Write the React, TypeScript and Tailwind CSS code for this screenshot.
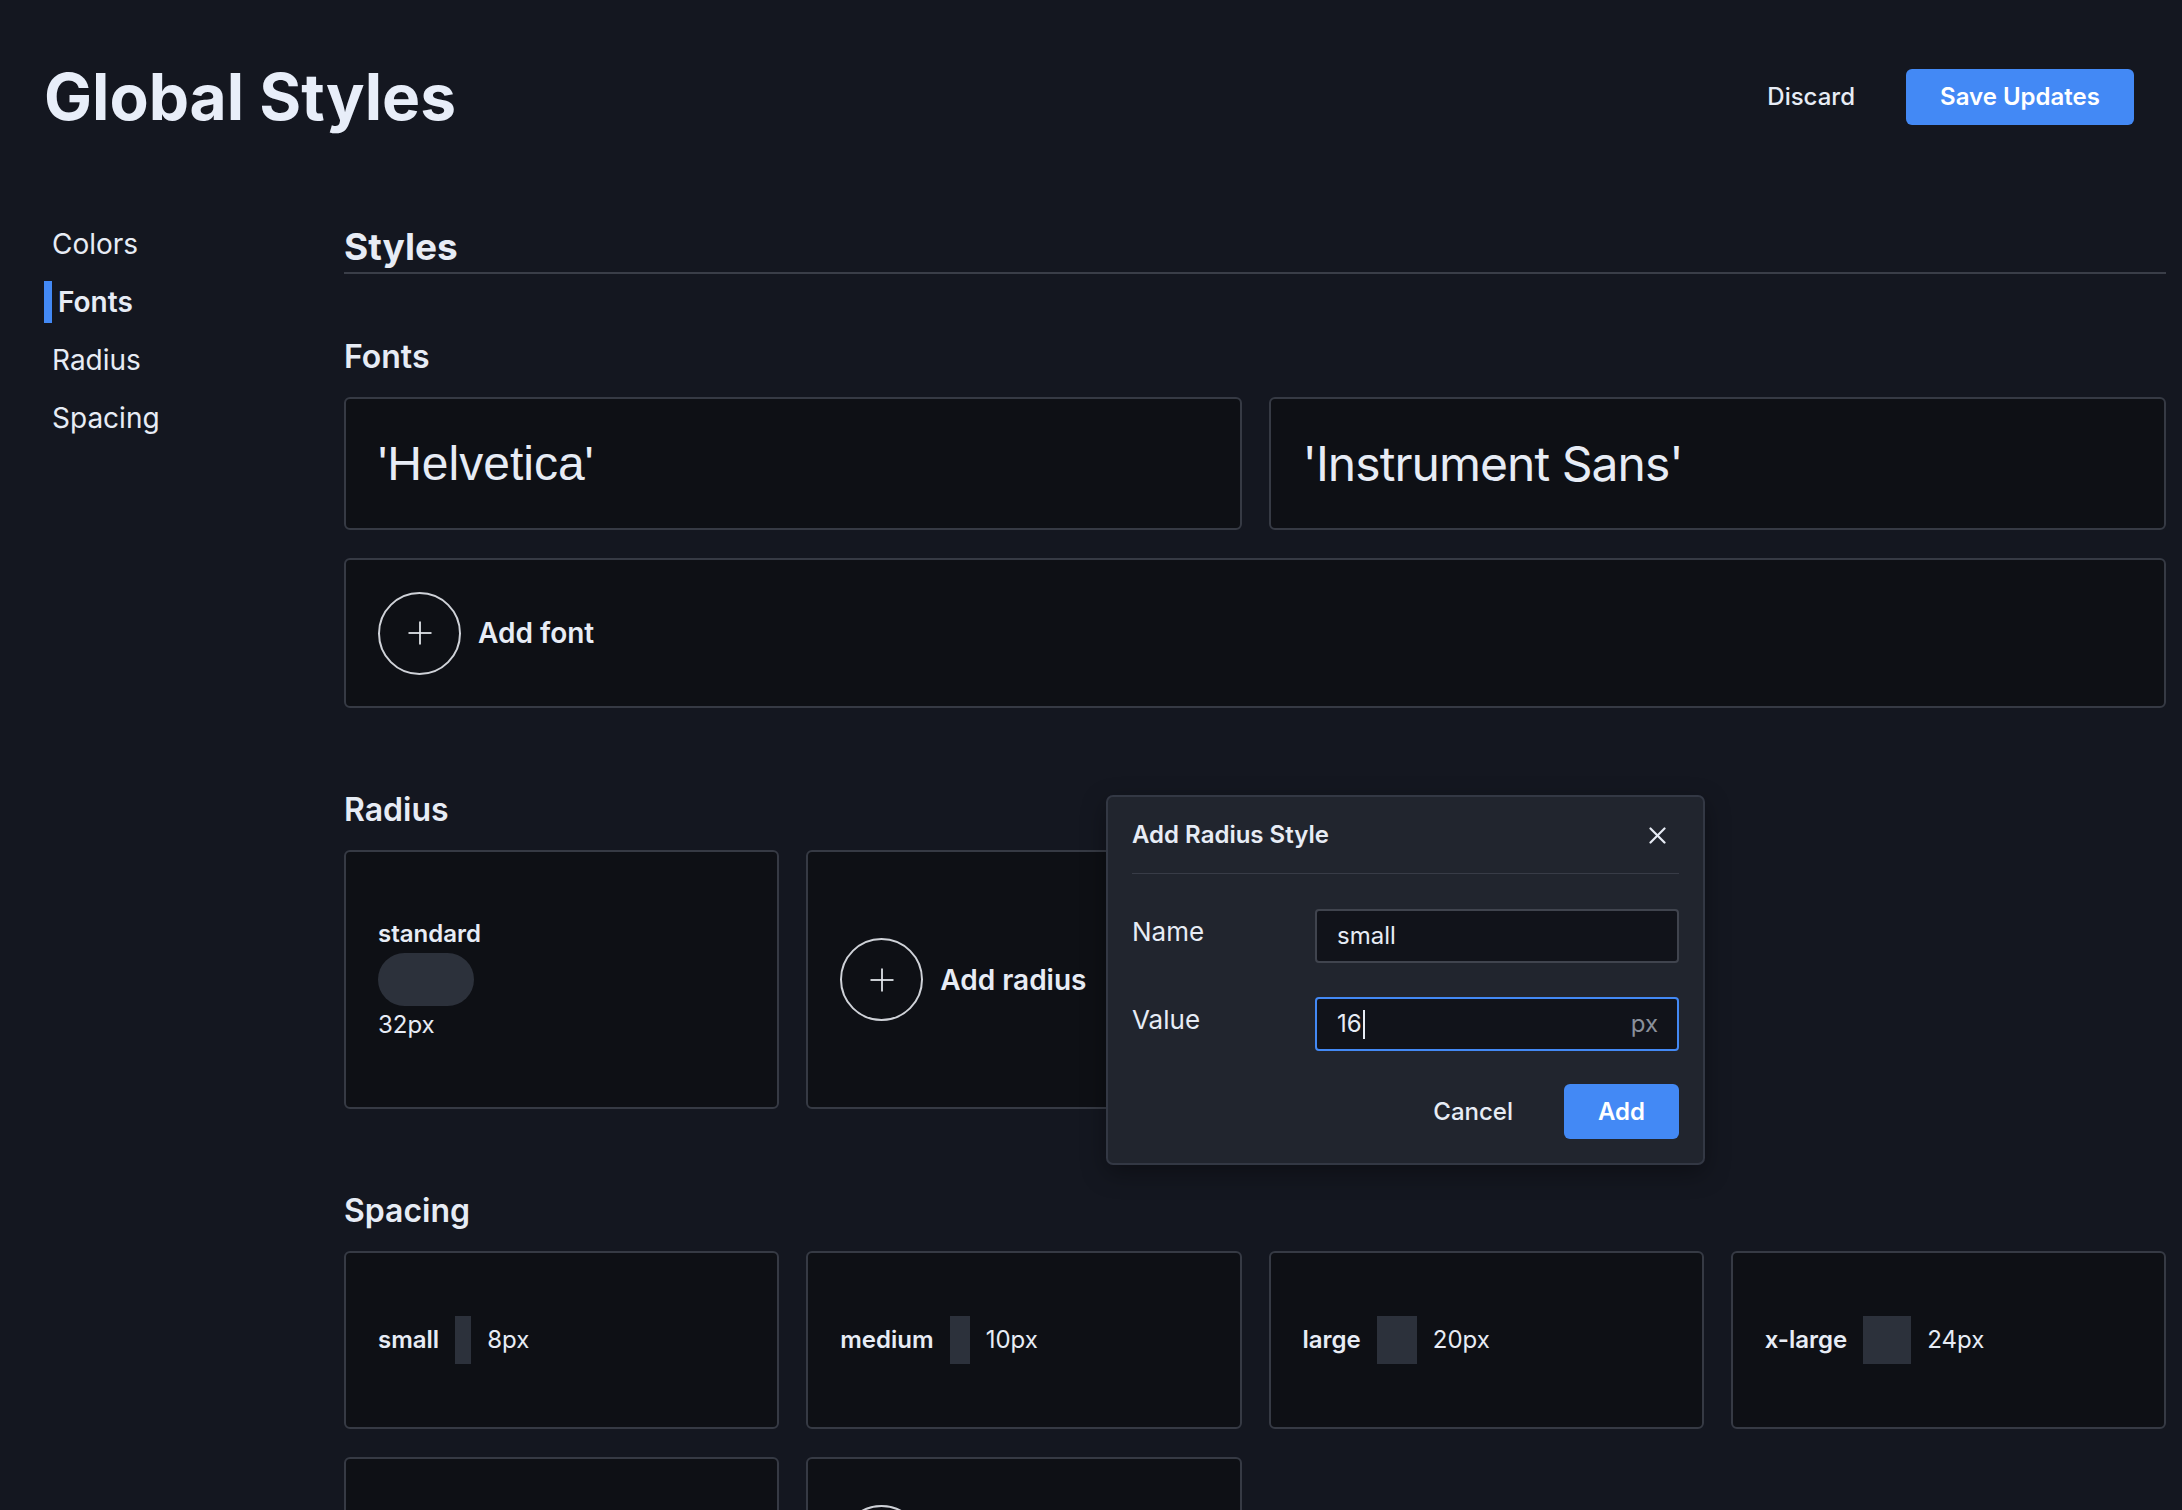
import React from "react";

const cardCls = "rounded-[6px] border-2 border-[#363a44] bg-[#0e1015]";

function PlusCircle() {
  return (
    <div className="flex h-[83px] w-[83px] shrink-0 items-center justify-center rounded-full border-2 border-[#cfd2d8]">
      <svg width="24" height="24" viewBox="0 0 24 24" fill="none" stroke="#e5e8ee" strokeWidth="1.75" strokeLinecap="butt">
        <line x1="0.5" y1="12" x2="23.5" y2="12" />
        <line x1="12" y1="0.5" x2="12" y2="23.5" />
      </svg>
    </div>
  );
}

function SectionTitle({ children }: { children: React.ReactNode }) {
  return <h3 className="mb-[22px] text-[32px] font-semibold leading-[36px]">{children}</h3>;
}

const spacing = [
  { name: "small", value: "8px", w: "w-[16px]" },
  { name: "medium", value: "10px", w: "w-[20px]" },
  { name: "large", value: "20px", w: "w-[40px]" },
  { name: "x-large", value: "24px", w: "w-[48px]" },
];

export default function App() {
  return (
    <div className="relative h-[1510px] w-full overflow-hidden bg-[#141720] font-['Inter',sans-serif] text-[#e7ecf5]">
      <div className="pt-[65px]">
        <header className="flex h-[64px] items-center justify-between pl-[44px] pr-[48px]">
          <h1 className="text-[64px] font-bold leading-[64px] text-[#e8eef9]">Global Styles</h1>
          <div className="flex items-center gap-[26px]">
            <button className="h-[56px] px-[25px] text-[24px] font-medium text-[#e7ecf5]">Discard</button>
            <button className="h-[56px] w-[228px] rounded-[6px] bg-[#4389f5] text-[24px] font-semibold text-white">
              Save Updates
            </button>
          </div>
        </header>

        <div className="mt-[93px] flex pl-[44px]">
          <nav className="flex w-[300px] shrink-0 flex-col gap-[16px] pt-[1px] text-[28px] leading-[42px]">
            <div className="pl-[8px]">Colors</div>
            <div className="border-l-[8px] border-[#4389f5] pl-[6px] font-semibold">Fonts</div>
            <div className="pl-[8px]">Radius</div>
            <div className="pl-[8px]">Spacing</div>
          </nav>

          <main className="w-[1822px] shrink-0">
            <h2 className="border-b-2 border-[#3a3e48] text-[37px] font-bold leading-[50px]">Styles</h2>

            <section className="mt-[65px]">
              <SectionTitle>Fonts</SectionTitle>
              <div className="grid grid-cols-2 gap-[27px]">
                <div className={`${cardCls} flex h-[133px] items-center pl-[32px]`}>
                  <span className="font-['Liberation_Sans',Arial,sans-serif] text-[48px] leading-[56px]">'Helvetica'</span>
                </div>
                <div className={`${cardCls} flex h-[133px] items-center pl-[32px]`}>
                  <span className="text-[48px] leading-[56px] tracking-[-0.02em]">'Instrument Sans'</span>
                </div>
              </div>
              <div className={`${cardCls} mt-[28px] flex h-[150px] items-center gap-[17px] pl-[32px]`}>
                <PlusCircle />
                <span className="text-[28px] font-semibold">Add font</span>
              </div>
            </section>

            <section className="mt-[84px]">
              <SectionTitle>Radius</SectionTitle>
              <div className="grid grid-cols-4 gap-[27px]">
                <div className={`${cardCls} flex h-[259px] items-center pl-[32px]`}>
                  <div className="flex flex-col items-start gap-[3px] text-[24px] leading-[32px]">
                    <span className="font-semibold">standard</span>
                    <div className="h-[53px] w-[96px] rounded-[32px] bg-[#2c313b]" />
                    <span>32px</span>
                  </div>
                </div>
                <div className={`${cardCls} flex h-[259px] items-center gap-[17px] pl-[32px]`}>
                  <PlusCircle />
                  <span className="text-[28px] font-semibold">Add radius</span>
                </div>
              </div>
            </section>

            <section className="mt-[84px]">
              <SectionTitle>Spacing</SectionTitle>
              <div className="grid grid-cols-4 gap-x-[27px] gap-y-[28px]">
                {spacing.map((s) => (
                  <div key={s.name} className={`${cardCls} flex h-[178px] items-center gap-[16px] pl-[32px] text-[24px] leading-[32px]`}>
                    <span className="font-semibold">{s.name}</span>
                    <div className={`h-[48px] ${s.w} bg-[#2c313b]`} />
                    <span>{s.value}</span>
                  </div>
                ))}
                <div className={`${cardCls} h-[178px]`} />
                <div className={`${cardCls} flex h-[178px] items-center pl-[32px]`}>
                  <PlusCircle />
                </div>
              </div>
            </section>
          </main>
        </div>
      </div>

      {/* Add Radius Style popover */}
      <div className="absolute left-[1106px] top-[795px] w-[599px] rounded-[7px] border-2 border-[#333844] bg-[#21252e] px-[24px] pb-[24px] pt-[22px] shadow-[0_8px_24px_rgba(0,0,0,0.35)]">
        <div className="flex h-[32px] items-center justify-between">
          <span className="text-[24px] font-semibold leading-[32px]">Add Radius Style</span>
          <button className="flex h-[32px] w-[44px] items-center justify-center">
            <svg width="17" height="17" viewBox="0 0 17 17" fill="none" stroke="#e7ecf5" strokeWidth="2.2" strokeLinecap="round">
              <line x1="1.5" y1="1.5" x2="15.5" y2="15.5" />
              <line x1="15.5" y1="1.5" x2="1.5" y2="15.5" />
            </svg>
          </button>
        </div>
        <div className="mt-[22px] h-px bg-[#383c47]" />

        <div className="mt-[35px] flex items-center">
          <label className="w-[183px] pb-[8px] text-[26px] leading-[32px]">Name</label>
          <div className="flex h-[54px] flex-1 items-center rounded-[4px] border-2 border-[#40444e] bg-[#11131a] pl-[20px] text-[24px]">
            small
          </div>
        </div>

        <div className="mt-[34px] flex items-center">
          <label className="w-[183px] pb-[8px] text-[26px] leading-[32px]">Value</label>
          <div className="flex h-[54px] flex-1 items-center justify-between rounded-[4px] border-2 border-[#4389f5] bg-[#11131a] pl-[20px] pr-[19px] text-[24px]">
            <span className="flex items-center">
              16
              <span className="ml-[1px] inline-block h-[29px] w-[2px] bg-[#e7ecf5]" />
            </span>
            <span className="text-[#8a909b]">px</span>
          </div>
        </div>

        <div className="mt-[33px] flex items-center justify-end gap-[26px]">
          <button className="h-[55px] px-[25px] text-[24px] font-medium">Cancel</button>
          <button className="h-[55px] w-[115px] rounded-[6px] bg-[#4389f5] text-[24px] font-semibold text-white">Add</button>
        </div>
      </div>
    </div>
  );
}
